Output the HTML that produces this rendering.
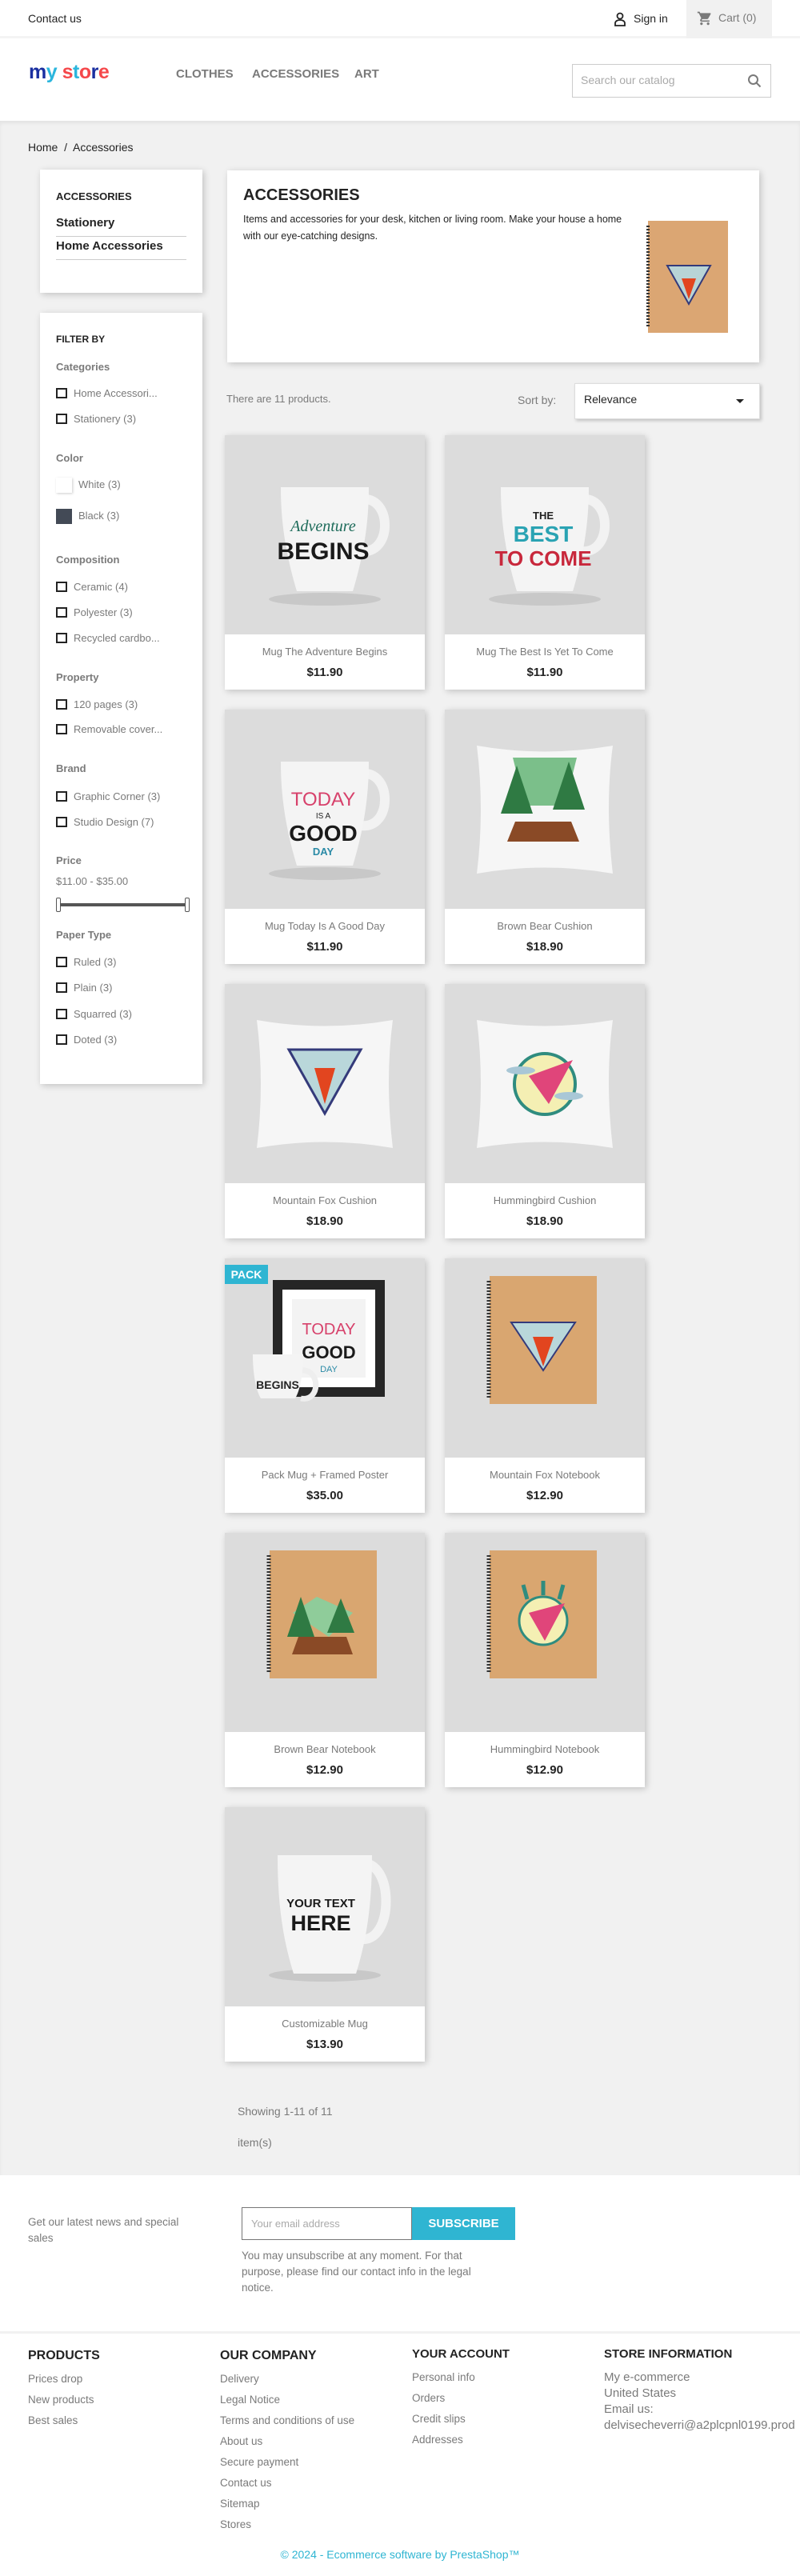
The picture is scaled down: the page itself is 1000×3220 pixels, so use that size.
<!DOCTYPE html>
<html><head><meta charset="utf-8"><style>
*{margin:0;padding:0;box-sizing:border-box}
body{width:1000px;height:3220px;position:relative;font-family:"Liberation Sans",sans-serif;background:#fff;color:#232323;overflow:hidden}
.a{position:absolute}
.t{position:absolute;white-space:nowrap}
.card{position:absolute;width:250px;height:318px;background:#fff;box-shadow:2px 2px 8px rgba(0,0,0,.2)}
.card .img{height:249px;background:#dcdcdc;position:relative;overflow:hidden}
.card .nm{position:absolute;top:263px;left:0;width:250px;text-align:center;font-size:13px;color:#7a7a7a}
.card .pr{position:absolute;top:288px;left:0;width:250px;text-align:center;font-size:15px;font-weight:bold;color:#232323}
.fl{font-size:13px;color:#7a7a7a}
.fh{font-size:13px;font-weight:bold;color:#7a7a7a}
.cb{position:absolute;width:14px;height:13px;border:2px solid #232323}
.ft a{display:block;color:#7a7a7a;font-size:13.5px;text-decoration:none;height:26px}
</style></head><body>
<div class="a" style="left:0;top:0;width:1000px;height:48px;background:#fff;border-bottom:3px solid #f4f4f4"></div>
<div class="t" style="left:35px;top:15px;font-size:14px;color:#232323">Contact us</div>
<svg class="a" style="left:767px;top:15px" width="16" height="18" viewBox="0 0 16 18"><circle cx="8" cy="5" r="3.5" fill="none" stroke="#232323" stroke-width="1.8"/><path d="M2 17v-3c0-2 2-4 6-4s6 2 6 4v3z" fill="none" stroke="#232323" stroke-width="1.8"/></svg>
<div class="t" style="left:792px;top:15px;font-size:14px">Sign in</div>
<div class="a" style="left:858px;top:0;width:107px;height:48px;background:#f1f1f1"></div>
<svg class="a" style="left:871px;top:13px" width="20" height="20" viewBox="0 0 24 24"><path d="M7 18c-1.1 0-2 .9-2 2s.9 2 2 2 2-.9 2-2-.9-2-2-2zM1 2v2h2l3.6 7.6L5.2 14c-.1.3-.2.6-.2 1 0 1.1.9 2 2 2h12v-2H7.4c-.1 0-.2-.1-.2-.2v-.1l.9-1.7h7.4c.8 0 1.4-.4 1.7-1l3.6-6.5c.1-.2.2-.3.2-.5 0-.6-.4-1-1-1H5.2l-.9-2zm16 16c-1.1 0-2 .9-2 2s.9 2 2 2 2-.9 2-2-.9-2-2-2z" fill="#7a7a7a"/></svg>
<div class="t" style="left:898px;top:14px;font-size:14px;color:#7a7a7a">Cart (0)</div>
<div class="t" style="left:36px;top:76px;font-size:25px;font-weight:bold;letter-spacing:-0.5px"><span style="color:#1a2fa0">m</span><span style="color:#2bb6dd">y</span> <span style="color:#f5484b">s</span><span style="color:#2bb6dd">t</span><span style="color:#f5484b">o</span><span style="color:#1a2fa0">r</span><span style="color:#f5484b">e</span></div>
<div class="t" style="left:220px;top:84px;font-size:15px;font-weight:bold;color:#7a7a7a">CLOTHES</div>
<div class="t" style="left:315px;top:84px;font-size:15px;font-weight:bold;color:#7a7a7a">ACCESSORIES</div>
<div class="t" style="left:443px;top:84px;font-size:15px;font-weight:bold;color:#7a7a7a">ART</div>
<div class="a" style="left:715px;top:80px;width:249px;height:42px;border:1px solid #ccc"></div>
<div class="t" style="left:726px;top:92px;font-size:14px;color:#aaa">Search our catalog</div>
<svg class="a" style="left:934px;top:92px" width="18" height="18" viewBox="0 0 18 18"><circle cx="7.5" cy="7.5" r="5.5" fill="none" stroke="#7a7a7a" stroke-width="2"/><path d="M11.5 11.5l5 5" stroke="#7a7a7a" stroke-width="2"/></svg>
<div class="a" style="left:0;top:151px;width:1000px;height:2568px;background:#f1f1f1;box-shadow:inset 0 3px 5px rgba(0,0,0,.06)"></div>
<div class="t" style="left:35px;top:176px;font-size:14px;color:#232323">Home &nbsp;/&nbsp; Accessories</div>
<div class="a" style="left:50px;top:212px;width:203px;height:154px;background:#fff;box-shadow:2px 2px 8px rgba(0,0,0,.2)"></div>
<div class="t" style="left:70px;top:238px;font-size:13px;font-weight:bold">ACCESSORIES</div>
<div class="t" style="left:70px;top:270px;font-size:15px;font-weight:bold">Stationery</div>
<div class="a" style="left:70px;top:295px;width:163px;height:1px;background:#ccc"></div>
<div class="t" style="left:70px;top:299px;font-size:15px;font-weight:bold">Home Accessories</div>
<div class="a" style="left:70px;top:324px;width:163px;height:1px;background:#ccc"></div>
<div class="a" style="left:284px;top:213px;width:665px;height:240px;background:#fff;box-shadow:2px 2px 8px rgba(0,0,0,.2)"></div>
<div class="t" style="left:304px;top:233px;font-size:20px;font-weight:bold">ACCESSORIES</div>
<div class="a" style="left:304px;top:264px;width:490px;font-size:12.5px;line-height:21px">Items and accessories for your desk, kitchen or living room. Make your house a home with our eye-catching designs.</div>
<svg class="a" style="left:806px;top:276px" width="106" height="142" viewBox="0 0 106 142"><rect x="4" width="100" height="140" fill="#dba673"/><path d="M4 6v128" stroke="#333" stroke-width="4" stroke-dasharray="2 2"/><polygon points="28,56 82,56 55,104" fill="#b8d4d6" stroke="#343a7a" stroke-width="2"/><polygon points="46,72 64,72 55,98" fill="#e2451f"/></svg>
<div class="a" style="left:50px;top:391px;width:203px;height:964px;background:#fff;box-shadow:2px 2px 8px rgba(0,0,0,.2)"></div>
<div class="t" style="left:70px;top:417px;font-size:12px;font-weight:bold">FILTER BY</div>
<div class="t fh" style="left:70px;top:451px">Categories</div>
<div class="cb" style="left:70px;top:485px"></div><div class="t fl" style="left:92px;top:484px">Home Accessori...</div>
<div class="cb" style="left:70px;top:517px"></div><div class="t fl" style="left:92px;top:516px">Stationery (3)</div>
<div class="t fh" style="left:70px;top:565px">Color</div>
<div class="a" style="left:70px;top:597px;width:20px;height:19px;background:#fff;box-shadow:1px 1px 3px rgba(0,0,0,.2)"></div><div class="t fl" style="left:98px;top:598px">White (3)</div>
<div class="a" style="left:70px;top:636px;width:20px;height:19px;background:#434a56"></div><div class="t fl" style="left:98px;top:637px">Black (3)</div>
<div class="t fh" style="left:70px;top:692px">Composition</div>
<div class="cb" style="left:70px;top:727px"></div><div class="t fl" style="left:92px;top:726px">Ceramic (4)</div>
<div class="cb" style="left:70px;top:759px"></div><div class="t fl" style="left:92px;top:758px">Polyester (3)</div>
<div class="cb" style="left:70px;top:791px"></div><div class="t fl" style="left:92px;top:790px">Recycled cardbo...</div>
<div class="t fh" style="left:70px;top:839px">Property</div>
<div class="cb" style="left:70px;top:874px"></div><div class="t fl" style="left:92px;top:873px">120 pages (3)</div>
<div class="cb" style="left:70px;top:905px"></div><div class="t fl" style="left:92px;top:904px">Removable cover...</div>
<div class="t fh" style="left:70px;top:953px">Brand</div>
<div class="cb" style="left:70px;top:989px"></div><div class="t fl" style="left:92px;top:988px">Graphic Corner (3)</div>
<div class="cb" style="left:70px;top:1021px"></div><div class="t fl" style="left:92px;top:1020px">Studio Design (7)</div>
<div class="t fh" style="left:70px;top:1068px">Price</div>
<div class="t fl" style="left:70px;top:1094px">$11.00 - $35.00</div>
<div class="a" style="left:74px;top:1129px;width:160px;height:4px;background:#555"></div>
<div class="a" style="left:70px;top:1122px;width:6px;height:18px;border:1px solid #555;border-radius:2px;background:#fff"></div>
<div class="a" style="left:231px;top:1122px;width:6px;height:18px;border:1px solid #555;border-radius:2px;background:#fff"></div>
<div class="t fh" style="left:70px;top:1161px">Paper Type</div>
<div class="cb" style="left:70px;top:1196px"></div><div class="t fl" style="left:92px;top:1195px">Ruled (3)</div>
<div class="cb" style="left:70px;top:1228px"></div><div class="t fl" style="left:92px;top:1227px">Plain (3)</div>
<div class="cb" style="left:70px;top:1261px"></div><div class="t fl" style="left:92px;top:1260px">Squarred (3)</div>
<div class="cb" style="left:70px;top:1293px"></div><div class="t fl" style="left:92px;top:1292px">Doted (3)</div>
<div class="t" style="left:283px;top:491px;font-size:13px;color:#7a7a7a">There are 11 products.</div>
<div class="t" style="left:647px;top:492px;font-size:14px;color:#7a7a7a">Sort by:</div>
<div class="a" style="left:718px;top:479px;width:232px;height:45px;background:#fff;border:1px solid #ddd;box-shadow:2px 2px 4px rgba(0,0,0,.2)"></div>
<div class="t" style="left:730px;top:491px;font-size:14px">Relevance</div>
<div class="a" style="left:920px;top:499px;border-left:5px solid transparent;border-right:5px solid transparent;border-top:5px solid #232323"></div>

<div class="card" style="left:281px;top:544px"><div class="img"><svg width="250" height="249"><ellipse cx="125" cy="205" rx="70" ry="8" fill="#c8c8c8"/><path d="M170 80c40-5 40 70 0 65" fill="none" stroke="#f2f2f2" stroke-width="12"/><path d="M70 65h110c0 40-5 80-20 130h-70c-15-50-20-90-20-130z" fill="#f4f4f4"/><text x="123" y="120" font-size="20" font-style="italic" fill="#1d6b5a" text-anchor="middle" font-family="Liberation Serif">Adventure</text><text x="123" y="155" font-size="30" font-weight="bold" fill="#1a1a1a" text-anchor="middle">BEGINS</text></svg></div><div class="nm">Mug The Adventure Begins</div><div class="pr">$11.90</div></div>
<div class="card" style="left:556px;top:544px"><div class="img"><svg width="250" height="249"><ellipse cx="125" cy="205" rx="70" ry="8" fill="#c8c8c8"/><path d="M170 80c40-5 40 70 0 65" fill="none" stroke="#f2f2f2" stroke-width="12"/><path d="M70 65h110c0 40-5 80-20 130h-70c-15-50-20-90-20-130z" fill="#f4f4f4"/><text x="123" y="105" font-size="13" font-weight="bold" fill="#222" text-anchor="middle">THE</text><text x="123" y="133" font-size="28" font-weight="bold" fill="#2aa3b3" text-anchor="middle">BEST</text><text x="123" y="163" font-size="26" font-weight="bold" fill="#c8283c" text-anchor="middle">TO COME</text></svg></div><div class="nm">Mug The Best Is Yet To Come</div><div class="pr">$11.90</div></div>

<div class="card" style="left:281px;top:887px"><div class="img"><svg width="250" height="249"><ellipse cx="125" cy="205" rx="70" ry="8" fill="#c8c8c8"/><path d="M170 80c40-5 40 70 0 65" fill="none" stroke="#f2f2f2" stroke-width="12"/><path d="M70 65h110c0 40-5 80-20 130h-70c-15-50-20-90-20-130z" fill="#f4f4f4"/><text x="123" y="120" font-size="24" fill="#d7416b" text-anchor="middle">TODAY</text><text x="123" y="136" font-size="10" fill="#222" text-anchor="middle">IS A</text><text x="123" y="164" font-size="28" font-weight="bold" fill="#1a1a1a" text-anchor="middle">GOOD</text><text x="123" y="182" font-size="13" font-weight="bold" fill="#2a8aa6" text-anchor="middle">DAY</text></svg></div><div class="nm">Mug Today Is A Good Day</div><div class="pr">$11.90</div></div>
<div class="card" style="left:556px;top:887px"><div class="img"><svg width="250" height="249"><path d="M40 45q85 15 170 0q-10 75 0 160q-85-15-170 0q10-80 0-160z" fill="#f6f6f6"/><polygon points="85,60 165,60 150,120 100,120" fill="#7bbf8a"/><polygon points="90,70 110,130 70,130" fill="#2f7a43"/><polygon points="155,65 175,125 135,125" fill="#2f7a43"/><path d="M88 140h70l10 25h-90z" fill="#8a4a26"/></svg></div><div class="nm">Brown Bear Cushion</div><div class="pr">$18.90</div></div>

<div class="card" style="left:281px;top:1230px"><div class="img"><svg width="250" height="249"><path d="M40 45q85 15 170 0q-10 75 0 160q-85-15-170 0q10-80 0-160z" fill="#f6f6f6"/><polygon points="80,82 170,82 125,162" fill="#b9d7da" stroke="#343a7a" stroke-width="3"/><polygon points="112,105 138,105 125,150" fill="#e2451f"/></svg></div><div class="nm">Mountain Fox Cushion</div><div class="pr">$18.90</div></div>
<div class="card" style="left:556px;top:1230px"><div class="img"><svg width="250" height="249"><path d="M40 45q85 15 170 0q-10 75 0 160q-85-15-170 0q10-80 0-160z" fill="#f6f6f6"/><circle cx="125" cy="125" r="38" fill="#f4efb3" stroke="#2f8c7f" stroke-width="4"/><polygon points="105,115 160,95 130,150" fill="#e0457a"/><ellipse cx="95" cy="108" rx="18" ry="5" fill="#a9c7d6"/><ellipse cx="155" cy="140" rx="18" ry="5" fill="#a9c7d6"/></svg></div><div class="nm">Hummingbird Cushion</div><div class="pr">$18.90</div></div>

<div class="card" style="left:281px;top:1573px"><div class="img"><svg width="250" height="249"><rect x="60" y="27" width="140" height="146" fill="#262626"/><rect x="72" y="39" width="116" height="122" fill="#fff"/><rect x="84" y="51" width="92" height="98" fill="#f3f3f3"/><text x="130" y="95" font-size="20" fill="#d7416b" text-anchor="middle">TODAY</text><text x="130" y="125" font-size="22" font-weight="bold" fill="#1a1a1a" text-anchor="middle">GOOD</text><text x="130" y="142" font-size="11" fill="#2a8aa6" text-anchor="middle">DAY</text><path d="M95 140c25-3 25 40 0 35" fill="none" stroke="#eee" stroke-width="7"/><path d="M35 120h63c0 25-4 45-10 55h-43c-6-10-10-30-10-55z" fill="#f4f4f4"/><text x="66" y="163" font-size="14" font-weight="bold" fill="#222" text-anchor="middle">BEGINS</text></svg><div class="a" style="left:0;top:8px;width:54px;height:24px;background:#2fb5d2;color:#fff;font-weight:bold;font-size:14px;line-height:24px;text-align:center">PACK</div></div><div class="nm">Pack Mug + Framed Poster</div><div class="pr">$35.00</div></div>
<div class="card" style="left:556px;top:1573px"><div class="img"><svg width="250" height="249"><rect x="56" y="22" width="134" height="160" fill="#d9a670"/><path d="M55 28v148" stroke="#333" stroke-width="5" stroke-dasharray="2 2"/><polygon points="83,80 163,80 123,140" fill="#b9d7da" stroke="#343a7a" stroke-width="2"/><polygon points="110,98 136,98 123,135" fill="#e2451f"/></svg></div><div class="nm">Mountain Fox Notebook</div><div class="pr">$12.90</div></div>

<div class="card" style="left:281px;top:1916px"><div class="img"><svg width="250" height="249"><rect x="56" y="22" width="134" height="160" fill="#d9a670"/><path d="M55 28v148" stroke="#333" stroke-width="5" stroke-dasharray="2 2"/><polygon points="85,100 115,80 160,100 130,130" fill="#8fcc9a"/><polygon points="95,80 112,130 78,130" fill="#2f7a43"/><polygon points="145,82 162,125 128,125" fill="#2f7a43"/><path d="M92 130h60l8 22h-76z" fill="#8a4a26"/></svg></div><div class="nm">Brown Bear Notebook</div><div class="pr">$12.90</div></div>
<div class="card" style="left:556px;top:1916px"><div class="img"><svg width="250" height="249"><rect x="56" y="22" width="134" height="160" fill="#d9a670"/><path d="M55 28v148" stroke="#333" stroke-width="5" stroke-dasharray="2 2"/><circle cx="123" cy="110" r="30" fill="#f4efb3" stroke="#2f8c7f" stroke-width="3"/><polygon points="105,100 150,88 125,135" fill="#e0457a"/><path d="M98 65l5 18M123 60v18M148 65l-5 18" stroke="#2f8c7f" stroke-width="5"/></svg></div><div class="nm">Hummingbird Notebook</div><div class="pr">$12.90</div></div>

<div class="card" style="left:281px;top:2259px"><div class="img"><svg width="250" height="249"><ellipse cx="125" cy="210" rx="70" ry="8" fill="#c8c8c8"/><path d="M170 70c42-5 42 100 0 95" fill="none" stroke="#f2f2f2" stroke-width="12"/><path d="M66 60h118c0 55-5 100-20 148h-78c-15-48-20-93-20-148z" fill="#f4f4f4"/><text x="120" y="125" font-size="15" font-weight="bold" fill="#1a1a1a" text-anchor="middle">YOUR TEXT</text><text x="120" y="154" font-size="27" font-weight="bold" fill="#1a1a1a" text-anchor="middle">HERE</text></svg></div><div class="nm">Customizable Mug</div><div class="pr">$13.90</div></div>

<div class="t" style="left:297px;top:2631px;font-size:14px;color:#7a7a7a">Showing 1-11 of 11</div>
<div class="t" style="left:297px;top:2670px;font-size:14px;color:#7a7a7a">item(s)</div>

<div class="a" style="left:35px;top:2768px;width:225px;font-size:13.5px;line-height:20px;color:#7a7a7a">Get our latest news and special<br>sales</div>
<div class="a" style="left:302px;top:2759px;width:213px;height:41px;border:1px solid #777;background:#fff"></div>
<div class="t" style="left:314px;top:2772px;font-size:13px;color:#aaa">Your email address</div>
<div class="a" style="left:515px;top:2759px;width:129px;height:41px;background:#2fb5d2;color:#fff;font-weight:bold;font-size:15px;line-height:41px;text-align:center">SUBSCRIBE</div>
<div class="a" style="left:302px;top:2810px;width:350px;font-size:13.5px;line-height:20px;color:#7a7a7a">You may unsubscribe at any moment. For that<br>purpose, please find our contact info in the legal<br>notice.</div>
<div class="a" style="left:0;top:2914px;width:1000px;height:3px;background:#f1f1f1"></div>
<div class="t" style="left:35px;top:2936px;font-size:16px;font-weight:bold">PRODUCTS</div>
<div class="t" style="left:275px;top:2936px;font-size:16px;font-weight:bold">OUR COMPANY</div>
<div class="t" style="left:515px;top:2934px;font-size:15px;font-weight:bold">YOUR ACCOUNT</div>
<div class="t" style="left:755px;top:2934px;font-size:15px;font-weight:bold">STORE INFORMATION</div>
<div class="a ft" style="left:35px;top:2966px"><a>Prices drop</a><a>New products</a><a>Best sales</a></div>
<div class="a ft" style="left:275px;top:2966px"><a>Delivery</a><a>Legal Notice</a><a>Terms and conditions of use</a><a>About us</a><a>Secure payment</a><a>Contact us</a><a>Sitemap</a><a>Stores</a></div>
<div class="a ft" style="left:515px;top:2964px"><a>Personal info</a><a>Orders</a><a>Credit slips</a><a>Addresses</a></div>
<div class="a" style="left:755px;top:2962px;font-size:15px;line-height:20px;color:#7a7a7a;white-space:nowrap">My e-commerce<br>United States<br>Email us:<br>delvisecheverri@a2plcpnl0199.prod</div>
<div class="t" style="left:0;top:3185px;width:1000px;text-align:center;font-size:14px;color:#2fb5d2">© 2024 - Ecommerce software by PrestaShop™</div>
</body></html>
